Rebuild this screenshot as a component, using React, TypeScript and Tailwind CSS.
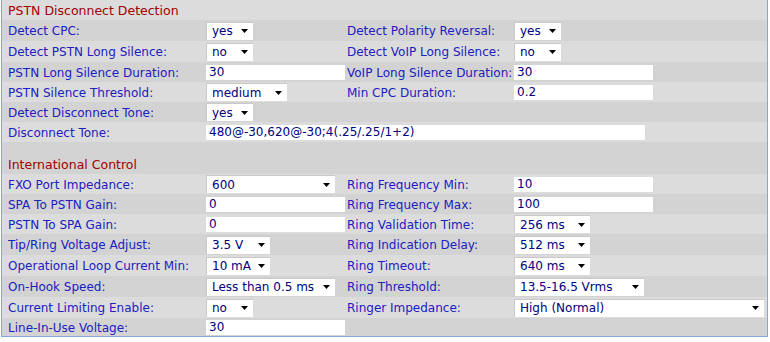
type Ctl =
  | { kind: "select"; value: string; w: number }
  | { kind: "input"; value: string; w: number };

type Row =
  | { type: "head"; title: string; h: string; dark: boolean }
  | { type: "blank"; h: string; dark: boolean }
  | { type: "field"; h: string; dark: boolean; l1: string; c1: Ctl; l2?: string; c2?: Ctl; wide?: boolean };

const sel = (value: string, w: number): Ctl => ({ kind: "select", value, w });
const inp = (value: string, w: number): Ctl => ({ kind: "input", value, w });

const rows: Row[] = [
  { type: "head", title: "PSTN Disconnect Detection", h: "h-[20px]", dark: false },
  { type: "field", h: "h-[21px]", dark: true, l1: "Detect CPC:", c1: sel("yes", 47), l2: "Detect Polarity Reversal:", c2: sel("yes", 47) },
  { type: "field", h: "h-[21px]", dark: false, l1: "Detect PSTN Long Silence:", c1: sel("no", 47), l2: "Detect VoIP Long Silence:", c2: sel("no", 47) },
  { type: "field", h: "h-[20px]", dark: true, l1: "PSTN Long Silence Duration:", c1: inp("30", 139), l2: "VoIP Long Silence Duration:", c2: inp("30", 139) },
  { type: "field", h: "h-[20px]", dark: false, l1: "PSTN Silence Threshold:", c1: sel("medium", 81), l2: "Min CPC Duration:", c2: inp("0.2", 139) },
  { type: "field", h: "h-[20px]", dark: true, l1: "Detect Disconnect Tone:", c1: sel("yes", 47) },
  { type: "field", h: "h-[20px]", dark: false, l1: "Disconnect Tone:", c1: inp("480@-30,620@-30;4(.25/.25/1+2)", 439), wide: true },
  { type: "blank", h: "h-[12px]", dark: true },
  { type: "head", title: "International Control", h: "h-[20px]", dark: true },
  { type: "field", h: "h-[20px]", dark: false, l1: "FXO Port Impedance:", c1: sel("600", 129), l2: "Ring Frequency Min:", c2: inp("10", 139) },
  { type: "field", h: "h-[20px]", dark: true, l1: "SPA To PSTN Gain:", c1: inp("0", 139), l2: "Ring Frequency Max:", c2: inp("100", 139) },
  { type: "field", h: "h-[20px]", dark: false, l1: "PSTN To SPA Gain:", c1: inp("0", 139), l2: "Ring Validation Time:", c2: sel("256 ms", 76) },
  { type: "field", h: "h-[21px]", dark: true, l1: "Tip/Ring Voltage Adjust:", c1: sel("3.5 V", 64), l2: "Ring Indication Delay:", c2: sel("512 ms", 76) },
  { type: "field", h: "h-[21px]", dark: false, l1: "Operational Loop Current Min:", c1: sel("10 mA", 64), l2: "Ring Timeout:", c2: sel("640 ms", 76) },
  { type: "field", h: "h-[21px]", dark: true, l1: "On-Hook Speed:", c1: sel("Less than 0.5 ms", 129), l2: "Ring Threshold:", c2: sel("13.5-16.5 Vrms", 130) },
  { type: "field", h: "h-[21px]", dark: false, l1: "Current Limiting Enable:", c1: sel("no", 47), l2: "Ringer Impedance:", c2: sel("High (Normal)", 250) },
  { type: "field", h: "h-[18px]", dark: true, l1: "Line-In-Use Voltage:", c1: inp("30", 139) },
];

function Control({ c }: { c: Ctl }) {
  if (c.kind === "input") {
    return (
      <div className="flex h-[15px] items-center bg-white pl-[3px] text-[#000080]" style={{ width: c.w }}>
        {c.value}
      </div>
    );
  }
  return (
    <div
      className="flex h-[18px] items-center justify-between border-t border-l border-[#c9c9c9] bg-white pr-[5px] pl-[5px] text-[#000080]"
      style={{ width: c.w }}
    >
      <span className="whitespace-nowrap">{c.value}</span>
      <svg width="7" height="4" viewBox="0 0 7 4" className="shrink-0">
        <path d="M0 0h7L3.5 4z" fill="#000" />
      </svg>
    </div>
  );
}

export default function App() {
  return (
    <div className="h-[342px] bg-white font-['DejaVu_Sans',sans-serif] text-[12px] leading-[14px]">
      <div className="ml-[1px] w-[767px] border-x border-b border-[#84a6dc]">
        {rows.map((r, i) => {
          const bg = r.dark ? "bg-[#d3d3d3]" : "bg-[#dcdcdc]";
          if (r.type === "blank") return <div key={i} className={`${r.h} ${bg}`} />;
          if (r.type === "head")
            return (
              <div key={i} className={`${r.h} ${bg} flex items-end pb-[2px] pl-[6px] text-[12.5px] text-[#a00000]`}>
                {r.title}
              </div>
            );
          return (
            <div key={i} className={`${r.h} ${bg} grid grid-cols-[204px_141px_167px_1fr] items-center`}>
              <div className="pl-[6px] pt-[1px] whitespace-nowrap text-[#2020c0]">{r.l1}</div>
              <div className={r.wide ? "col-span-3" : ""}>
                <Control c={r.c1} />
              </div>
              {!r.wide && (
                <>
                  <div className="pt-[1px] whitespace-nowrap text-[#2020c0]">{r.l2 ?? ""}</div>
                  <div>{r.c2 && <Control c={r.c2} />}</div>
                </>
              )}
            </div>
          );
        })}
      </div>
    </div>
  );
}
